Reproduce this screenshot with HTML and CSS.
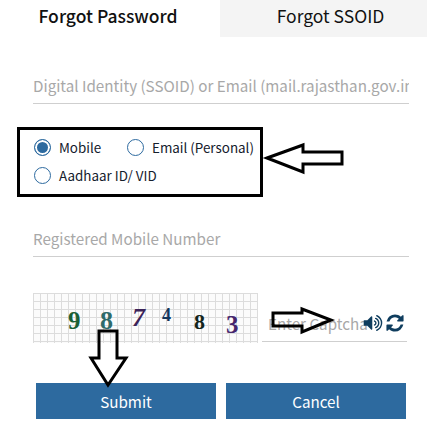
FILE: index.html
```html
<!DOCTYPE html>
<html lang="en">
<head>
    <meta charset="UTF-8">
    <title>Forgot Password</title>
    <link rel="stylesheet" href="styles.css">
</head>
<body>
    <div class="page">
        <div class="tabs">
            <div class="tab tab-active">Forgot Password</div>
            <div class="tab">Forgot SSOID</div>
        </div>

        <form class="form">
            <div class="field field-ssoid">
                <span class="placeholder">Digital Identity (SSOID) or Email (mail.rajasthan.gov.in)</span>
            </div>

            <div class="radio-box">
                <div class="radio-row">
                    <label class="radio radio-mobile"><span class="dot dot-on"></span>Mobile</label>
                    <label class="radio"><span class="dot"></span>Email (Personal)</label>
                </div>
                <div class="radio-row">
                    <label class="radio"><span class="dot"></span>Aadhaar ID/ VID</label>
                </div>
            </div>

            <div class="field field-number">
                <span class="placeholder">Registered Mobile Number</span>
            </div>

            <div class="captcha-row">
                <div class="captcha">
                    <span class="digit d1">9</span>
                    <span class="digit d2">8</span>
                    <span class="digit d3">7</span>
                    <span class="digit d4">4</span>
                    <span class="digit d5">8</span>
                    <span class="digit d6">3</span>
                </div>
                <div class="captcha-input">
                    <span class="placeholder">Enter Captcha</span>
                    <svg class="icon" viewBox="0 0 1792 1792" width="20" height="20">
                        <path d="M832 352v1088q0 26-19 45t-45 19-45-19l-333-333h-262q-26 0-45-19t-19-45v-384q0-26 19-45t45-19h262l333-333q19-19 45-19t45 19 19 45zm384 544q0 76-42.500 141.500t-112.500 93.500q-10 5-25 5-26 0-45-18.500t-19-45.500q0-21 12-35.500t29-25 34-23 29-36 12-56.500-12-56.500-29-36-34-23-29-25-12-35.500q0-27 19-45.500t45-18.500q15 0 25 5 70 27 112.500 93t42.500 142zm256 0q0 153-85 282.500t-225 188.500q-13 5-25 5-27 0-46-19t-19-45q0-39 39-59 56-29 76-44 74-54 115.500-135.500t41.500-173.500-41.500-173.500-115.500-135.500q-20-15-76-44-39-20-39-59 0-26 19-45t45-19q13 0 26 5 140 59 225 188.500t85 282.500zm256 0q0 230-127 422.500t-338 283.500q-13 5-26 5-26 0-45-19t-19-45q0-36 39-59 7-4 22.500-10.500t22.500-10.500q46-25 82-51 123-91 192-227t69-289-69-289-192-227q-36-26-82-51-7-4-22.500-10.500t-22.500-10.500q-39-23-39-59 0-26 19-45t45-19q13 0 26 5 211 91 338 283.500t127 422.500z"/>
                    </svg>
                    <svg class="icon" viewBox="0 0 1792 1792" width="20" height="20">
                        <path d="M1639 1056q0 5-1 7-64 268-268 434.500t-478 166.500q-146 0-282.500-55t-243.500-157l-129 129q-19 19-45 19t-45-19-19-45v-448q0-26 19-45t45-19h448q26 0 45 19t19 45-19 45l-137 137q71 66 161 102t187 36q134 0 250-65t186-179q11-17 53-117 8-23 30-23h192q13 0 22.500 9.500t9.500 22.500zm25-800v448q0 26-19 45t-45 19h-448q-26 0-45-19t-19-45 19-45l138-138q-148-137-349-137-134 0-250 65t-186 179q-11 17-53 117-8 23-30 23h-199q-13 0-22.500-9.500t-9.500-22.500v-7q65-268 270-434.500t480-166.500q146 0 284 55.500t245 156.500l130-129q19-19 45-19t45 19 19 45z"/>
                    </svg>
                </div>
            </div>

            <div class="buttons">
                <button type="button" class="btn">Submit</button>
                <button type="button" class="btn">Cancel</button>
            </div>
        </form>

        <!-- hand drawn arrows on top of the screenshot -->
        <svg class="arrows" viewBox="0 0 427 429" width="427" height="429">
            <path d="M267 158L303 145V152H342V164H303V172Z"/>
            <path d="M273 313H302V309L331 320L302 332V326H273Z"/>
            <path d="M99 331H117V358H126L108 385L91 358H99Z"/>
        </svg>
    </div>
</body>
</html>
```

FILE: styles.css
```css
* {
    box-sizing: border-box;
}
body {
    margin: 0;
    background-color: white;
    font-family: "Noto Sans CJK SC", "Noto Sans", sans-serif;
}
.page {
    position: relative;
    width: 427px;
    height: 429px;
    overflow: hidden;
}
.tabs {
    display: flex;
    height: 37px;
}
.tab {
    display: flex;
    justify-content: center;
    align-items: center;
    width: 207px;
    padding: 0 0 6px 14px;
    background-color: #f4f4f4;
    color: #111;
    font-size: 17.500px;
}
.tab-active {
    width: 220px;
    padding: 0 4px 6px 0;
    background-color: white;
    font-weight: 500;
}
.form {
    padding: 0 18px 0 33px;
}
.field {
    height: 27px;
    border-bottom: 1px solid #cfcfcf;
    white-space: nowrap;
}
/* long placeholder gets cut at the end of the input */
.field-ssoid {
    margin-top: 40px;
    overflow: hidden;
}
.field-number {
    margin-top: 33px;
}
.placeholder {
    display: block;
    color: #a8a8a8;
    font-size: 15.200px;
    line-height: 16px;
}
.radio-box {
    width: 246px;
    height: 70px;
    margin: 23px 0 0 -16px;
    padding: 3px 0 0 14px;
    border: 3px solid black;
}
.radio-row {
    display: flex;
    height: 28px;
    align-items: center;
}
.radio {
    display: flex;
    align-items: center;
    gap: 8px;
    color: #14202c;
    font-size: 13.400px;
    white-space: nowrap;
}
.radio-mobile {
    width: 93px;
}
.dot {
    width: 17px;
    height: 17px;
    border: 1px solid #2d6a9f;
    border-radius: 50%;
    background-color: white;
}
.dot-on {
    background-color: #2d6a9f;
    box-shadow: inset 0 0 0 2px white;
}
.captcha-row {
    display: flex;
    margin-top: 36px;
}
.captcha {
    position: relative;
    width: 225px;
    height: 50px;
    background-color: #fbfbfb;
    background-image:
        linear-gradient(#dcdcdc 1px, transparent 1px),
        linear-gradient(90deg, #dcdcdc 1px, transparent 1px);
    background-size: 7px 8px;
}
.digit {
    position: absolute;
    font-family: "Liberation Serif", serif;
    font-weight: bold;
    line-height: 1;
}
.d1 { left: 35px; top: 15px; font-size: 25px; color: #1a6035; }
.d2 { left: 67px; top: 15px; font-size: 26px; color: #2f6b6b; }
.d3 { left: 99px; top: 12px; font-size: 26px; font-style: italic; color: #3b2358; }
.d4 { left: 129px; top: 13px; font-size: 18px; color: #14365c; }
.d5 { left: 161px; top: 18px; font-size: 22px; color: #14261c; }
.d6 { left: 193px; top: 19px; font-size: 25px; color: #46266e; }
.captcha-input {
    display: flex;
    align-items: center;
    gap: 2px;
    width: 145px;
    height: 49px;
    margin-left: 4px;
    padding: 11px 2px 0 6px;
    border-bottom: 1px solid #cfcfcf;
    white-space: nowrap;
}
/* text runs in under the speaker icon, same as the original */
.captcha-input .placeholder {
    flex: 1;
    width: 0;
    min-width: 0;
}
.icon {
    flex: none;
    fill: #0f3d5e;
}
.buttons {
    display: flex;
    gap: 10px;
    margin: 40px 0 0 3px;
}
.btn {
    width: 180px;
    height: 36px;
    border: none;
    background-color: #2d6a9f;
    color: white;
    font-family: inherit;
    font-size: 15.200px;
    cursor: pointer;
}
.arrows {
    position: absolute;
    top: 0;
    left: 0;
}
.arrows path {
    fill: none;
    stroke: black;
    stroke-width: 3;
}
```
